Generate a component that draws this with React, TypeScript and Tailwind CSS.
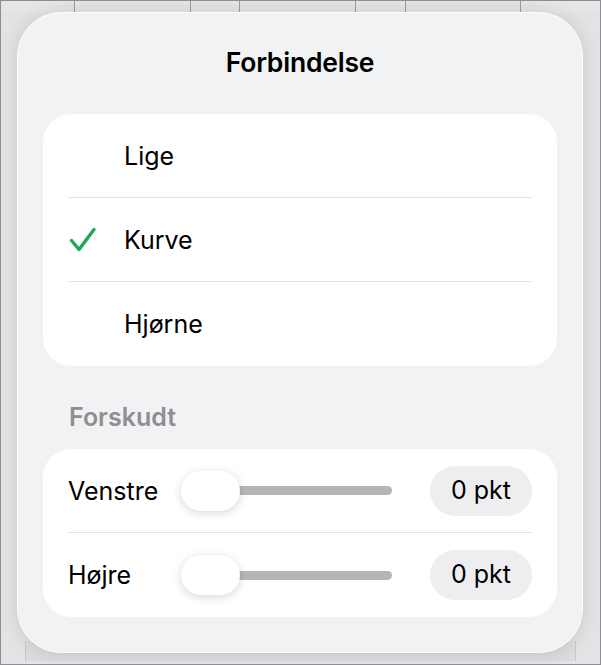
import React from 'react';

const options = [
  { id: 'lige', label: 'Lige', checked: false },
  { id: 'kurve', label: 'Kurve', checked: true },
  { id: 'hjorne', label: 'Hjørne', checked: false },
];

const sliders = [
  { id: 'venstre', label: 'Venstre', value: '0 pkt' },
  { id: 'hojre', label: 'Højre', value: '0 pkt' },
];

const gridLines = [73, 189, 238, 354, 404, 519];

const Check: React.FC = () => (
  <svg width="28" height="26" viewBox="0 0 28 26" fill="none">
    <path d="M2.5 13.5 L10 22.5 L25 2.5" stroke="#1fa85a" strokeWidth="3.4" strokeLinecap="round" strokeLinejoin="round" />
  </svg>
);

const App: React.FC = () => {
  return (
    <div
      className="relative w-[601px] h-[665px] overflow-hidden bg-[#e3e3e6] border border-[#8e8e93]"
      style={{ fontFamily: 'Inter, "Liberation Sans", sans-serif' }}
    >
      {/* backdrop behind the popover */}
      <div className="relative h-[12px] bg-[#e6e6e9]">
        {gridLines.map((x) => (
          <div key={x} className="absolute top-0 h-full w-px bg-[#9c9ca0]" style={{ left: x }} />
        ))}
      </div>
      <div className="mx-[24px] mt-[628px] h-[20px] bg-[#dcdcdf] border-x border-[#c8c8cc]" />

      {/* popover */}
      <div className="absolute left-[16px] top-[11px] w-[566px] h-[641px] rounded-[44px] bg-[#f1f2f3] border border-white shadow-[0_0_18px_rgba(0,0,0,0.12)] flex flex-col">
        <div className="pt-[33px] h-[101px] text-center text-[26.5px] leading-[32px] font-semibold text-black tracking-[-0.2px]">
          Forbindelse
        </div>

        <div className="mx-[25px] bg-white rounded-[28px] px-[25px]">
          {options.map((o, i) => (
            <div
              key={o.id}
              className={`h-[84px] flex items-center ${i < options.length - 1 ? 'border-b border-[#e3e3e6]' : ''}`}
            >
              <div className="w-[56px] flex items-center pl-[1px]">{o.checked && <Check />}</div>
              <span className="text-[25px] leading-[30px] text-black">{o.label}</span>
            </div>
          ))}
        </div>

        <div className="h-[83px] pl-[51px] pt-[36px] text-[25px] leading-[30px] font-semibold text-[#8e8e93]">
          Forskudt
        </div>

        <div className="mx-[25px] bg-white rounded-[28px] px-[25px]">
          {sliders.map((s, i) => (
            <div
              key={s.id}
              className={`h-[84px] flex items-center ${i < sliders.length - 1 ? 'border-b border-[#e3e3e6]' : ''}`}
            >
              <span className="w-[113px] text-[25px] leading-[30px] text-black">{s.label}</span>
              <div className="relative w-[211px] h-[40px] flex items-center">
                <div className="ml-[20px] w-[191px] h-[9px] rounded-full bg-[#b5b5b7]" />
                <div className="absolute left-0 top-0 w-[59px] h-[40px] rounded-full bg-white shadow-[0_2px_10px_rgba(0,0,0,0.16)]" />
              </div>
              <div className="ml-auto w-[102px] h-[50px] rounded-full bg-[#eeeef0] flex items-center justify-center text-[25px] text-black">
                {s.value}
              </div>
            </div>
          ))}
        </div>
      </div>
    </div>
  );
};

export default App;
